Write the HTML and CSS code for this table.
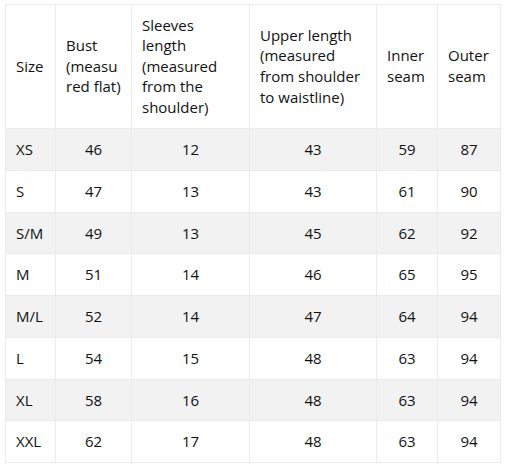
FILE: index.html
```html
<!DOCTYPE html>
<html lang="en">
<head>
<meta charset="utf-8">
<title>Size chart</title>
<link rel="stylesheet" href="styles.css">
</head>
<body>
<table class="size-table">
  <colgroup>
    <col class="c-size">
    <col class="c-bust">
    <col class="c-sleeve">
    <col class="c-upper">
    <col class="c-inner">
    <col class="c-outer">
  </colgroup>
  <thead>
    <tr>
      <th>Size</th>
      <th>Bust (measured flat)</th>
      <th>Sleeves length (measured from the shoulder)</th>
      <th>Upper length (measured from shoulder to waistline)</th>
      <th>Inner seam</th>
      <th>Outer seam</th>
    </tr>
  </thead>
  <tbody>
    <tr><td>XS</td><td>46</td><td>12</td><td>43</td><td>59</td><td>87</td></tr>
    <tr><td>S</td><td>47</td><td>13</td><td>43</td><td>61</td><td>90</td></tr>
    <tr><td>S/M</td><td>49</td><td>13</td><td>45</td><td>62</td><td>92</td></tr>
    <tr><td>M</td><td>51</td><td>14</td><td>46</td><td>65</td><td>95</td></tr>
    <tr><td>M/L</td><td>52</td><td>14</td><td>47</td><td>64</td><td>94</td></tr>
    <tr><td>L</td><td>54</td><td>15</td><td>48</td><td>63</td><td>94</td></tr>
    <tr><td>XL</td><td>58</td><td>16</td><td>48</td><td>63</td><td>94</td></tr>
    <tr><td>XXL</td><td>62</td><td>17</td><td>48</td><td>63</td><td>94</td></tr>
  </tbody>
</table>
</body>
</html>
```
FILE: styles.css
```css
html, body {
  margin: 0;
  background: #ffffff;
}
body {
  padding: 4px 5px;
  font-family: "Open Sans", "Noto Sans", sans-serif;
  font-size: 15px;
  color: #111111;
}
.size-table {
  border-collapse: collapse;
  table-layout: fixed;
  width: 495px;
}
.c-size { width: 50px; }
.c-bust { width: 76px; }
.c-sleeve { width: 118px; }
.c-upper { width: 127px; }
.c-inner { width: 61px; }
.c-outer { width: 63px; }

.size-table th,
.size-table td {
  border: 1px solid #ebebeb;
  line-height: 20.6px;
  overflow-wrap: anywhere;
}
.size-table th {
  font-weight: normal;
  text-align: left;
  vertical-align: middle;
  padding: 9px 10px 10px 10px;
  height: 104px;
}
.size-table td {
  text-align: center;
  padding: 10px 4px;
  height: 20.75px;
}
.size-table td:first-child {
  text-align: left;
  padding-left: 10px;
}
.size-table tbody tr:nth-child(odd) {
  background: #f2f2f2;
}
```
